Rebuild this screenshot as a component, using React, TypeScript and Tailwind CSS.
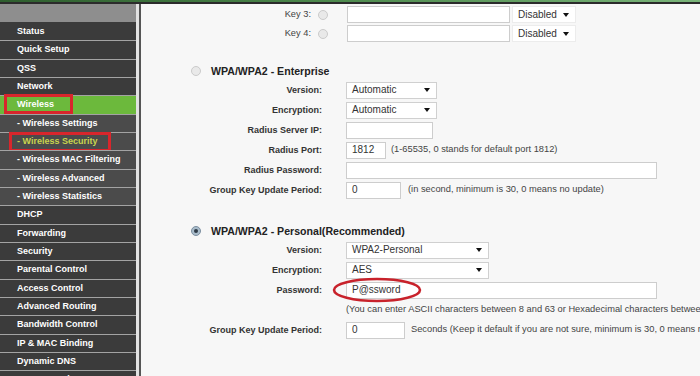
import React from "react";

type Item = { label: string; kind: "normal" | "active" | "sub" | "subActive" };

const items: Item[] = [
  { label: "Status", kind: "normal" },
  { label: "Quick Setup", kind: "normal" },
  { label: "QSS", kind: "normal" },
  { label: "Network", kind: "normal" },
  { label: "Wireless", kind: "active" },
  { label: "- Wireless Settings", kind: "sub" },
  { label: "- Wireless Security", kind: "subActive" },
  { label: "- Wireless MAC Filtering", kind: "sub" },
  { label: "- Wireless Advanced", kind: "sub" },
  { label: "- Wireless Statistics", kind: "sub" },
  { label: "DHCP", kind: "normal" },
  { label: "Forwarding", kind: "normal" },
  { label: "Security", kind: "normal" },
  { label: "Parental Control", kind: "normal" },
  { label: "Access Control", kind: "normal" },
  { label: "Advanced Routing", kind: "normal" },
  { label: "Bandwidth Control", kind: "normal" },
  { label: "IP & MAC Binding", kind: "normal" },
  { label: "Dynamic DNS", kind: "normal" },
  { label: "System Tools", kind: "normal" },
];

function SideItem({ item, first }: { item: Item; first: boolean }) {
  const bg =
    item.kind === "active"
      ? "bg-[#6cb93c]"
      : item.kind === "sub" || item.kind === "subActive"
      ? "bg-[#4b4b4b]"
      : "bg-[#3b3b3b]";
  const color = item.kind === "subActive" ? "text-[#c9d44e]" : "text-white";
  return (
    <div
      className={`relative flex h-[18.33px] shrink-0 items-center pl-[17px] ${bg} ${
        first ? "" : "border-t-[1.5px] border-[#a3a3a3]"
      }`}
    >
      <span className={`text-[9px] font-bold leading-none ${color}`}>{item.label}</span>
      {item.kind === "active" && (
        <div className="absolute left-[4px] top-[-2px] h-[20px] w-[69px] border-[3px] border-[#d8262c]" />
      )}
      {item.kind === "subActive" && (
        <div className="absolute left-[9px] top-[-1px] h-[20px] w-[102px] border-[3px] border-[#d8262c]" />
      )}
    </div>
  );
}

function Radio({ checked }: { checked?: boolean }) {
  return checked ? (
    <span className="flex h-[10px] w-[10px] items-center justify-center rounded-full border border-[#7d8fa0] bg-[#a9bccb]">
      <span className="h-[4px] w-[4px] rounded-full bg-[#2e3a46]" />
    </span>
  ) : (
    <span className="block h-[10px] w-[10px] rounded-full border border-[#cbcbcb] bg-[#e9e9e9]" />
  );
}

function Caret() {
  return (
    <span className="h-0 w-0 border-x-[3px] border-t-[4px] border-x-transparent border-t-[#111]" />
  );
}

function Select({ w, text, plain }: { w: string; text: string; plain?: boolean }) {
  return (
    <div
      className={`flex h-[17px] items-center justify-between bg-white pl-[5px] pr-[6px] ${w} ${
        plain ? "border border-[#ececec]" : "border border-[#d0d0d0]"
      }`}
    >
      <span className="text-[10px] leading-none text-[#333]">{text}</span>
      <Caret />
    </div>
  );
}

function Input({ w, value }: { w: string; value?: string }) {
  return (
    <div className={`flex h-[17px] items-center border border-[#cdcdcd] bg-white pl-[5px] ${w}`}>
      <span className="text-[10px] leading-none text-[#333]">{value}</span>
    </div>
  );
}

function Row({
  label,
  children,
  extra,
}: {
  label: string;
  children?: React.ReactNode;
  extra?: React.ReactNode;
}) {
  return (
    <div className="relative flex h-[20px] shrink-0 items-center">
      <div className="w-[181px] shrink-0 text-right text-[9px] font-bold leading-none text-[#333]">
        {label}
      </div>
      <div className="ml-[24px] flex items-center">{children}</div>
      {extra}
    </div>
  );
}

function Note({ children, ml }: { children: React.ReactNode; ml: string }) {
  return (
    <span className={`${ml} whitespace-nowrap text-[9.3px] leading-none text-[#444]`}>{children}</span>
  );
}

function KeyRow({ label }: { label: string }) {
  return (
    <div className="flex h-[19px] shrink-0 items-center">
      <div className="w-[170px] shrink-0 text-right text-[9.3px] leading-none text-[#444]">{label}</div>
      <div className="ml-[7px]">
        <Radio />
      </div>
      <div className="ml-[19px]">
        <Input w="w-[163px]" />
      </div>
      <div className="ml-[2px]">
        <Select w="w-[64px]" text="Disabled" plain />
      </div>
    </div>
  );
}

function Heading({ text, checked }: { text: string; checked?: boolean }) {
  return (
    <div className="flex h-[18px] shrink-0 items-center pl-[50px]">
      <Radio checked={checked} />
      <span className="ml-[10px] text-[10.6px] font-bold leading-none text-[#222]">{text}</span>
    </div>
  );
}

export default function App() {
  return (
    <div className="flex h-[376px] w-[700px] flex-col overflow-hidden bg-[#f7f7f7] font-['Liberation_Sans',Arial,sans-serif]">
      <div className="h-[2px] shrink-0 bg-gradient-to-r from-[#2e5e2e] via-[#4f8c4f] to-[#7ab57a]" />
      <div className="h-[2px] shrink-0 bg-[#2b2b2b]" />
      <div className="flex min-h-0 flex-1">
        <div className="flex w-[136px] shrink-0 flex-col">
          <div className="h-[18px] shrink-0 bg-[#8e8e8e]" />
          {items.map((it, i) => (
            <SideItem key={it.label} item={it} first={i === 0} />
          ))}
        </div>
        <div className="w-[3px] shrink-0 bg-[#e2e2e2]" />
        <div className="w-[2px] shrink-0 bg-[#555]" />
        <div className="flex min-w-0 flex-1 flex-col overflow-hidden pt-[1px]">
          <KeyRow label="Key 3:" />
          <KeyRow label="Key 4:" />
          <div className="h-[19px] shrink-0" />
          <Heading text="WPA/WPA2 - Enterprise" />
          <Row label="Version:">
            <Select w="w-[91px]" text="Automatic" />
          </Row>
          <Row label="Encryption:">
            <Select w="w-[91px]" text="Automatic" />
          </Row>
          <Row label="Radius Server IP:">
            <Input w="w-[87px]" />
          </Row>
          <Row label="Radius Port:">
            <Input w="w-[40px]" value="1812" />
            <Note ml="ml-[5px]">(1-65535, 0 stands for default port 1812)</Note>
          </Row>
          <Row label="Radius Password:">
            <Input w="w-[311px]" />
          </Row>
          <Row label="Group Key Update Period:">
            <Input w="w-[55px]" value="0" />
            <Note ml="ml-[7px]">(in second, minimum is 30, 0 means no update)</Note>
          </Row>
          <div className="h-[22px] shrink-0" />
          <Heading text="WPA/WPA2 - Personal(Recommended)" checked />
          <Row label="Version:">
            <Select w="w-[143px]" text="WPA2-Personal" />
          </Row>
          <Row label="Encryption:">
            <Select w="w-[143px]" text="AES" />
          </Row>
          <Row
            label="Password:"
            extra={
              <svg
                className="absolute left-[191px] top-[-3px]"
                width="90"
                height="26"
                viewBox="0 0 90 26"
              >
                <ellipse cx="45" cy="13" rx="43" ry="11" fill="none" stroke="#c8222b" strokeWidth="2.6" />
              </svg>
            }
          >
            <Input w="w-[311px]" value="P@ssword" />
          </Row>
          <div className="flex h-[20px] shrink-0 items-center pl-[205px]">
            <Note ml="ml-0">
              (You can enter ASCII characters between 8 and 63 or Hexadecimal characters between 8 and 64.)
            </Note>
          </div>
          <Row label="Group Key Update Period:">
            <Input w="w-[59px]" value="0" />
            <Note ml="ml-[6px]">
              Seconds (Keep it default if you are not sure, minimum is 30, 0 means no update)
            </Note>
          </Row>
        </div>
      </div>
    </div>
  );
}
